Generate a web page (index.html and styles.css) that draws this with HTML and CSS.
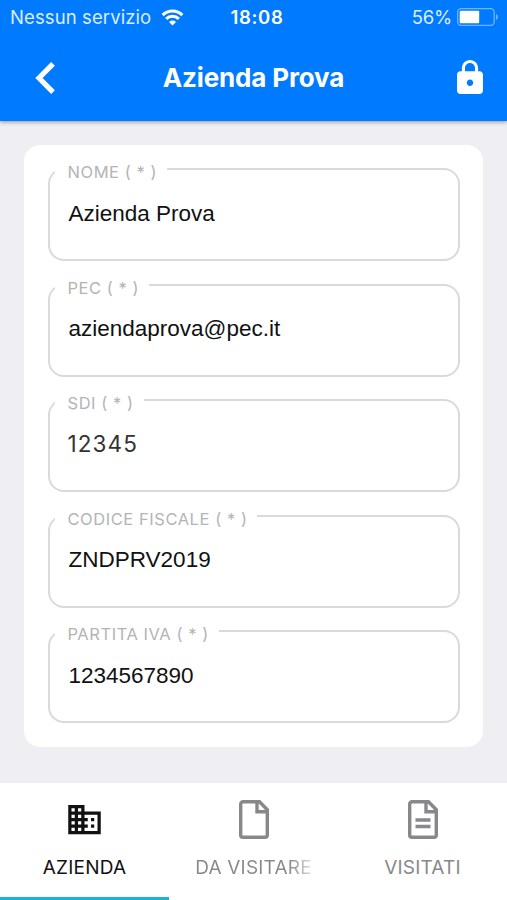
FILE: index.html
```html
<!DOCTYPE html>
<html lang="it">
<head>
<meta charset="utf-8">
<meta name="viewport" content="width=device-width, initial-scale=1">
<title>Azienda Prova</title>
<link rel="stylesheet" href="styles.css">
</head>
<body>
<div class="app">
  <header class="header">
    <div class="status">
      <div class="carrier"><span>Nessun servizio</span>
        <svg class="wifi" viewBox="0 0 24 18"><path d="M12 17.500 8.300 13.800a5.300 5.300 0 0 1 7.400 0z" fill="#fff"/><path d="M5.300 10.500a9.500 9.500 0 0 1 13.400 0M1.600 6.400a14.700 14.700 0 0 1 20.800 0" fill="none" stroke="#fff" stroke-width="3.300"/></svg>
      </div>
      <span class="clock">18:08</span>
      <div class="power"><span>56%</span>
        <svg class="battery" viewBox="0 0 42 18"><rect x=".7" y=".7" width="36.500" height="16.600" rx="3.500" fill="none" stroke="#72b5ff" stroke-width="1.300"/><rect x="2.700" y="2.800" width="19.500" height="12.400" rx="1" fill="#fff"/><path d="M39 6v6q2-1 2-3t-2-3z" fill="#72b5ff"/></svg>
      </div>
    </div>
    <div class="toolbar">
      <svg class="back" viewBox="0 0 20 32"><path d="M18 1.800 4 16l14 14.200" fill="none" stroke="#fff" stroke-width="5.200"/></svg>
      <h1 class="title">Azienda Prova</h1>
      <svg class="lock" viewBox="4 1 16 21"><path fill="#fff" d="M18 8h-1V6c0-2.76-2.24-5-5-5S7 3.240 7 6v2H6c-1.100 0-2 .9-2 2v10c0 1.100.9 2 2 2h12c1.100 0 2-.9 2-2V10c0-1.100-.9-2-2-2zm-6 9c-1.100 0-2-.9-2-2s.9-2 2-2 2 .9 2 2-.9 2-2 2zm3.100-9H8.900V6c0-1.710 1.390-3.100 3.100-3.100s3.100 1.390 3.100 3.100v2z"/></svg>
    </div>
  </header>
  <main class="content">
    <form class="card">
      <fieldset class="field"><legend>NOME ( * )</legend><div class="value">Azienda Prova</div></fieldset>
      <fieldset class="field"><legend>PEC ( * )</legend><div class="value">aziendaprova@pec.it</div></fieldset>
      <fieldset class="field"><legend>SDI ( * )</legend><div class="value value-light">12345</div></fieldset>
      <fieldset class="field"><legend>CODICE FISCALE ( * )</legend><div class="value">ZNDPRV2019</div></fieldset>
      <fieldset class="field"><legend>PARTITA IVA ( * )</legend><div class="value">1234567890</div></fieldset>
    </form>
  </main>
  <nav class="tabs">
    <a class="tab active">
      <svg class="icon" viewBox="0 0 24 24"><path fill="currentColor" d="M12 7V3H2v18h20V7H12zM6 19H4v-2h2v2zm0-4H4v-2h2v2zm0-4H4V9h2v2zm0-4H4V5h2v2zm4 12H8v-2h2v2zm0-4H8v-2h2v2zm0-4H8V9h2v2zm0-4H8V5h2v2zm10 12h-8v-2h2v-2h-2v-2h2v-2h-2V9h8v10zm-2-8h-2v2h2v-2zm0 4h-2v2h2v-2z"/></svg>
      <span>AZIENDA</span>
    </a>
    <a class="tab">
      <svg class="icon file" viewBox="0 0 30 39"><path d="M4 1.700h16.500l7.800 8V35a2.300 2.300 0 0 1-2.300 2.300H4A2.300 2.300 0 0 1 1.700 35V4A2.300 2.300 0 0 1 4 1.700zM18 2v9.800h10" fill="none" stroke="currentColor" stroke-width="3.400"/></svg>
      <span class="faded">DA VISITARE</span>
    </a>
    <a class="tab">
      <svg class="icon file" viewBox="0 0 30 39"><path d="M4 1.700h16.500l7.800 8V35a2.300 2.300 0 0 1-2.300 2.300H4A2.300 2.300 0 0 1 1.700 35V4A2.300 2.300 0 0 1 4 1.700zM18 2v9.800h10M7.500 20h15M7.500 26.500h15" fill="none" stroke="currentColor" stroke-width="3.400"/></svg>
      <span>VISITATI</span>
    </a>
  </nav>
</div>
</body>
</html>
```
FILE: styles.css
```css
* { box-sizing: border-box; }
body { margin: 0; font-family: Inter, sans-serif; background: #eeeef3; }
svg { display: block; flex: none; }
.app { height: 900px; display: flex; flex-direction: column; overflow: hidden; }
.header { height: 121px; flex: none; background: #007aff; color: #fff; box-shadow: 0 1px 4px rgba(0, 0, 0, .4); }
.status { height: 34px; padding: 0 8px 0 10px; display: grid; grid-template-columns: 1fr auto 1fr; align-items: center; font-size: 18.500px; color: #dcecff; }
.carrier, .power { display: flex; align-items: center; }
.carrier { gap: 10px; letter-spacing: .1px; }
.power { justify-content: flex-end; gap: 5px; letter-spacing: -.2px; }
.wifi { width: 23px; height: 17px; }
.battery { width: 42px; height: 18px; }
.clock { color: #fff; font-weight: 600; letter-spacing: .65px; margin-left: 5px; }
.toolbar { height: 87px; padding: 0 24px 0 35px; display: grid; grid-template-columns: 1fr auto 1fr; align-items: center; }
.back { width: 20px; height: 32px; }
.title { margin: 1px 11px 0 0; font-size: 26px; line-height: 32px; font-weight: 700; letter-spacing: -.15px; white-space: nowrap; }
.lock { width: 26px; height: 34px; justify-self: end; margin-top: -2px; }
.content { height: 662px; flex: none; padding: 24px 24px 0; }
.card { height: 602px; padding: 14px 23.500px 0; background: #fff; border-radius: 16px; }
.field { height: 102px; margin: 0 0 13.600px; padding: 0 0 0 5px; border: 2px solid #dadadb; border-radius: 16px; min-width: 0; }
.field legend { height: 20px; padding: 5px 10px 0 13px; font-size: 16.500px; line-height: 16px; letter-spacing: .55px; color: #b4b4b4; white-space: nowrap; }
.value { padding: 20.500px 0 0 14px; font: 22.500px/28px "Liberation Sans", sans-serif; color: #111; }
.value-light { padding: 20px 0 0 13px; font-family: Inter, sans-serif; letter-spacing: 1.1px; color: #333; }
.tabs { height: 117px; flex: none; display: grid; grid-template-columns: repeat(3, 1fr); background: #fff; }
.tab { display: flex; flex-direction: column; align-items: center; padding-top: 17px; color: #88888b; font-size: 19px; line-height: 24px; letter-spacing: .2px; border-bottom: 3px solid transparent; white-space: nowrap; }
.tab.active { color: #111; border-color: #1cb4d4; }
.icon { width: 39px; height: 39px; margin-bottom: 17px; }
.file { width: 30px; }
.faded { color: transparent; background: linear-gradient(90deg, #88888b 80%, #e0e0e2 100%); background-clip: text; -webkit-background-clip: text; }
```
